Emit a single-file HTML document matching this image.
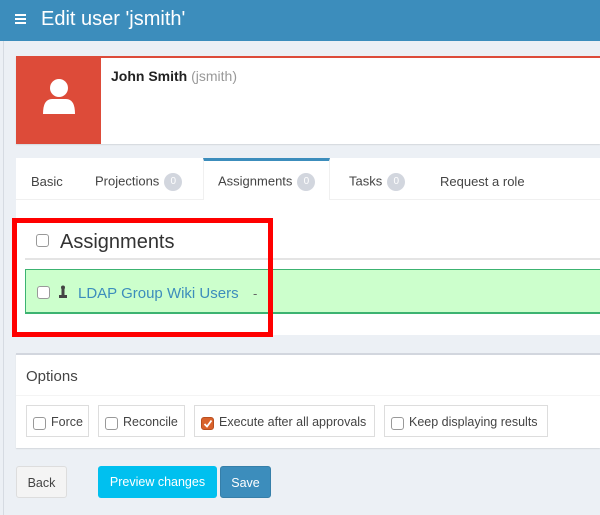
<!DOCTYPE html>
<html><head><meta charset="utf-8"><style>
*{box-sizing:border-box;margin:0;padding:0}
body{width:600px;height:515px;overflow:hidden;background:#ecf0f5;font-family:"Liberation Sans",sans-serif;color:#333;position:relative}
.abs{position:absolute}
.hdr{left:0;top:0;width:600px;height:41px;background:#3c8dbc;color:#fff}
.strip{left:3px;top:41px;width:1px;height:474px;background:#d6dbe2}
.cb{position:absolute;width:13px;height:13px;border:1px solid #999;border-radius:3px;background:#fff}
.badge{display:inline-block;width:18px;height:18px;border-radius:9px;background:#d2d6de;color:#fff;font-size:10px;text-align:center;line-height:18px;margin-left:5px;vertical-align:middle}
.tab{position:absolute;top:174px;font-size:13px;color:#444}
.opt{position:absolute;top:405px;height:32px;border:1px solid #ddd;background:#fff;font-size:12.5px;line-height:32px;padding-left:24px;color:#444}
.opt .cb{left:6px;top:11px}
.btn{position:absolute;top:466px;height:32px;font-size:12.5px;line-height:32px;text-align:center;border-radius:3px}
</style></head><body>
<div class="abs hdr">
 <div class="abs" style="left:15px;top:14px;width:11px;height:2px;background:#fff;box-shadow:0 4px 0 #fff,0 8px 0 #fff"></div>
 <div class="abs" style="left:41px;top:8px;font-size:20px">Edit user 'jsmith'</div>
</div>
<div class="abs strip"></div>
<div class="abs" style="left:16px;top:56px;width:584px;height:88px;background:#fff;border-top:2px solid #dd4b39;box-shadow:0 1px 1px rgba(0,0,0,.1)"></div>
<div class="abs" style="left:16px;top:56px;width:85px;height:88px;background:#dd4b39">
 <svg class="abs" style="left:26px;top:22px" width="34" height="38" viewBox="0 0 34 38"><circle cx="17" cy="10" r="9" fill="#fff"/><path d="M1 36 Q1 21 10 21 L24 21 Q33 21 33 36 Z" fill="#fff"/></svg>
</div>
<div class="abs" style="left:111px;top:68px;font-size:14px;font-weight:bold;color:#222">John Smith <span style="font-weight:normal;color:#999">(jsmith)</span></div>

<div class="abs" style="left:16px;top:158px;width:584px;height:177px;background:#fff"></div>
<div class="abs" style="left:16px;top:199px;width:584px;height:1px;background:#f0f0f0"></div>
<div class="abs" style="left:203px;top:158px;width:127px;height:42px;background:#fff;border-top:3px solid #3c8dbc;border-left:1px solid #f0f0f0;border-right:1px solid #f0f0f0"></div>
<div class="tab" style="left:31px">Basic</div>
<div class="tab" style="left:95px;top:173px">Projections<span class="badge">0</span></div>
<div class="tab" style="left:218px;top:173px">Assignments<span class="badge">0</span></div>
<div class="tab" style="left:349px;top:173px">Tasks<span class="badge">0</span></div>
<div class="tab" style="left:440px">Request a role</div>

<div class="cb" style="left:36px;top:234px"></div>
<div class="abs" style="left:60px;top:231px;font-size:20px;color:#333">Assignments</div>
<div class="abs" style="left:25px;top:258px;width:575px;height:2px;background:#e4e4e4"></div>
<div class="abs" style="left:25px;top:269px;width:575px;height:45px;background:#ccffcc;border:1px solid #3cb371;border-bottom-width:2px;border-right:none"></div>
<div class="cb" style="left:37px;top:286px"></div>
<svg class="abs" style="left:58px;top:285px" width="10" height="14" viewBox="0 0 10 14"><circle cx="5" cy="2.5" r="2" fill="#444"/><rect x="3.5" y="4" width="3" height="6" fill="#444"/><rect x="1" y="10" width="8" height="3" fill="#444"/></svg>
<div class="abs" style="left:78px;top:285px;font-size:15px;color:#3c8dbc">LDAP Group Wiki Users</div>
<div class="abs" style="left:253px;top:286px;font-size:13px;color:#666">-</div>
<div class="abs" style="left:12px;top:218px;width:261px;height:119px;border:5px solid #f00"></div>

<div class="abs" style="left:16px;top:353px;width:584px;height:95px;background:#fff;border-top:2px solid #d2d6de;box-shadow:0 1px 1px rgba(0,0,0,.1)"></div>
<div class="abs" style="left:26px;top:368px;font-size:15px;color:#444">Options</div>
<div class="abs" style="left:16px;top:395px;width:584px;height:1px;background:#f4f4f4"></div>
<div class="opt" style="left:26px;width:63px"><span class="cb"></span>Force</div>
<div class="opt" style="left:98px;width:87px"><span class="cb"></span>Reconcile</div>
<div class="opt" style="left:194px;width:181px"><span class="cb" style="background:#d9622b;border-color:#b94e1f"><svg style="position:absolute;left:1px;top:1px" width="10" height="10" viewBox="0 0 10 10"><path d="M1.5 5 L4 7.5 L8.5 1.5" stroke="#fff" stroke-width="1.8" fill="none"/></svg></span>Execute after all approvals</div>
<div class="opt" style="left:384px;width:164px"><span class="cb"></span>Keep displaying results</div>

<div class="btn" style="left:16px;width:51px;background:#f4f4f4;border:1px solid #ddd;color:#444">Back</div>
<div class="btn" style="left:98px;width:119px;background:#00c0ef;color:#fff">Preview changes</div>
<div class="btn" style="left:220px;width:51px;background:#3c8dbc;color:#fff;border:1px solid #367fa9">Save</div>
</body></html>
